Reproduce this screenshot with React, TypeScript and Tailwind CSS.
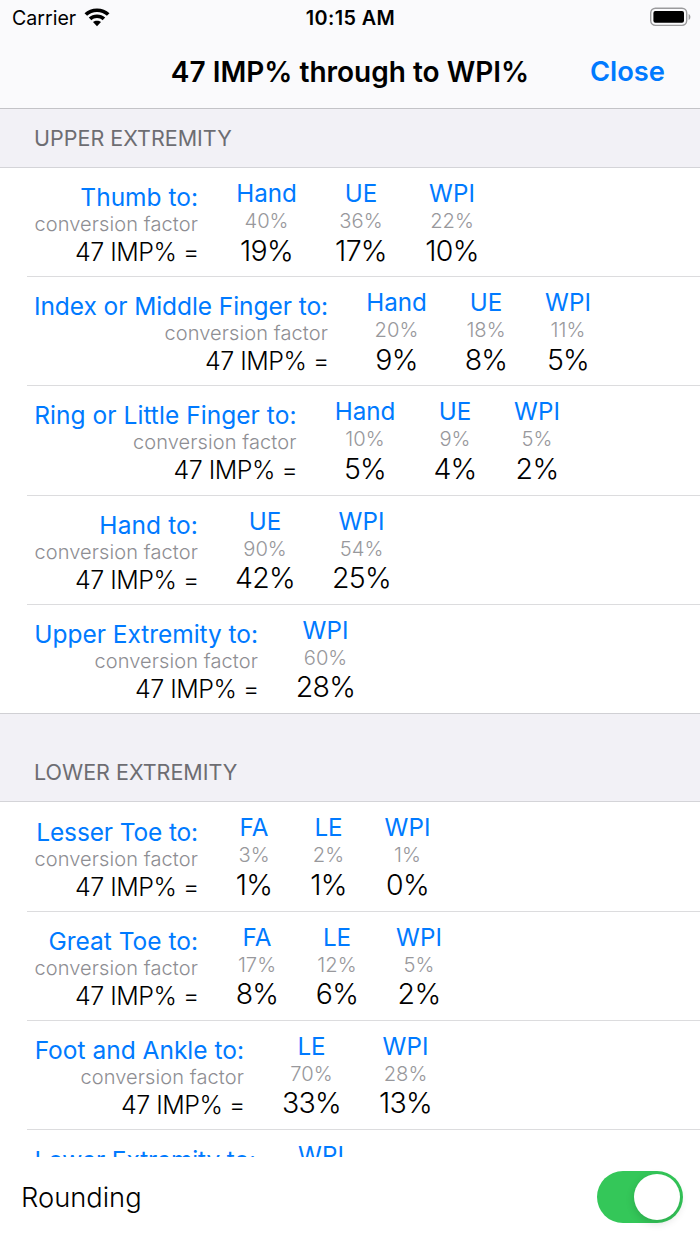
type Cell = { name: string; factor: string; value: string };
type Row = { label: string; tracking: string; cols: string; cells: Cell[] };

const upper: Row[] = [
  {
    label: "Thumb to:",
    tracking: "tracking-normal",
    cols: "grid-cols-[164px_60px_52px_53px]",
    cells: [
      { name: "Hand", factor: "40%", value: "19%" },
      { name: "UE", factor: "36%", value: "17%" },
      { name: "WPI", factor: "22%", value: "10%" },
    ],
  },
  {
    label: "Index or Middle Finger to:",
    tracking: "tracking-[-0.07px]",
    cols: "grid-cols-[294px_60px_42px_45px]",
    cells: [
      { name: "Hand", factor: "20%", value: "9%" },
      { name: "UE", factor: "18%", value: "8%" },
      { name: "WPI", factor: "11%", value: "5%" },
    ],
  },
  {
    label: "Ring or Little Finger to:",
    tracking: "tracking-[0.05px]",
    cols: "grid-cols-[262.5px_60px_43px_44px]",
    cells: [
      { name: "Hand", factor: "10%", value: "5%" },
      { name: "UE", factor: "9%", value: "4%" },
      { name: "WPI", factor: "5%", value: "2%" },
    ],
  },
  {
    label: "Hand to:",
    tracking: "tracking-[0.1px]",
    cols: "grid-cols-[164px_57px_59px]",
    cells: [
      { name: "UE", factor: "90%", value: "42%" },
      { name: "WPI", factor: "54%", value: "25%" },
    ],
  },
  {
    label: "Upper Extremity to:",
    tracking: "tracking-[-0.04px]",
    cols: "grid-cols-[224px_58px]",
    cells: [{ name: "WPI", factor: "60%", value: "28%" }],
  },
];

const lower: Row[] = [
  {
    label: "Lesser Toe to:",
    tracking: "tracking-[-0.14px]",
    cols: "grid-cols-[164px_35px_37px_44px]",
    cells: [
      { name: "FA", factor: "3%", value: "1%" },
      { name: "LE", factor: "2%", value: "1%" },
      { name: "WPI", factor: "1%", value: "0%" },
    ],
  },
  {
    label: "Great Toe to:",
    tracking: "tracking-normal",
    cols: "grid-cols-[164px_41px_42px_45px]",
    cells: [
      { name: "FA", factor: "17%", value: "8%" },
      { name: "LE", factor: "12%", value: "6%" },
      { name: "WPI", factor: "5%", value: "2%" },
    ],
  },
  {
    label: "Foot and Ankle to:",
    tracking: "tracking-normal",
    cols: "grid-cols-[210px_58px_53px]",
    cells: [
      { name: "LE", factor: "70%", value: "33%" },
      { name: "WPI", factor: "28%", value: "13%" },
    ],
  },
];

function LabelTitle({ children, tracking }: { children: string; tracking: string }) {
  return <div className={`text-[24.5px] leading-[30px] text-[#007aff] ${tracking}`}>{children}</div>;
}

function CellTitle({ children }: { children: string }) {
  return <div className="text-[24.2px] leading-[30px] text-[#007aff]">{children}</div>;
}

function ConversionRow({ row, last }: { row: Row; last: boolean }) {
  return (
    <div className={`h-[109.2px] shrink-0 ${last ? "" : "pl-[27px]"}`}>
      <div className={`h-full border-b ${last ? "border-[#d0d0d4] pl-[34px]" : "border-[#dcdcde] pl-[7px]"}`}>
        <div className={`grid gap-x-[38.5px] whitespace-nowrap ${row.cols}`}>
          <div className="flex flex-col items-end pt-[14.1px]">
            <LabelTitle tracking={row.tracking}>{row.label}</LabelTitle>
            <div className="text-[20px] leading-[24px] font-light tracking-[0.1px] text-[#8e8e93]">conversion factor</div>
            <div className="-mr-[0.8px] pt-px text-[25px] leading-[30px] font-light tracking-[-0.5px] text-black">
              47 IMP% =
            </div>
          </div>
          {row.cells.map((cell) => (
            <div key={cell.name} className="flex flex-col items-center pt-[11px]">
              <CellTitle>{cell.name}</CellTitle>
              <div className="text-[20.2px] leading-[24px] font-light text-[#98989c]">{cell.factor}</div>
              <div className="-mt-[0.5px] text-[28.5px] leading-[35px] font-light tracking-[-0.7px] text-black">{cell.value}</div>
            </div>
          ))}
        </div>
      </div>
    </div>
  );
}

function StatusBar() {
  return (
    <div className="grid h-9 grid-cols-3 items-center pr-[9px] pl-3">
      <div className="flex items-center gap-2">
        <span className="text-[19.6px] leading-6">Carrier</span>
        <svg width="26" height="19" viewBox="0 0 26 19" fill="black" className="mb-[2px]">
          <path d="M13 .4C8 .4 3.700 2.200.5 5.200l2.600 2.600C5.700 5.400 9.100 4 13 4s7.300 1.400 9.900 3.800l2.600-2.600C22.300 2.200 18 .4 13 .4z" />
          <path d="M13 6.500c-3.200 0-6 1.200-8.200 3.100l2.600 2.600c1.500-1.300 3.400-2.100 5.600-2.100s4.100.8 5.600 2.100l2.600-2.600c-2.200-1.900-5-3.100-8.200-3.100z" />
          <path d="M13 12.700c-1.500 0-2.900.5-4 1.400l4 4.200 4-4.200c-1.100-.9-2.500-1.400-4-1.400z" />
        </svg>
      </div>
      <div className="-ml-[2px] text-center text-[19.8px] leading-6 font-semibold tracking-[0.4px]">10:15 AM</div>
      <div className="flex justify-end">
        <svg width="42" height="20" viewBox="0 0 42 20" className="mb-[2px]">
          <rect x="1.7" y="1.200" width="36" height="17.200" rx="4.800" fill="none" stroke="#9b9b9d" strokeWidth="1.400" />
          <rect x="4.400" y="4" width="30.600" height="11.800" rx="2" fill="black" />
          <path d="M39.600 7v6c1.200-.5 1.800-1.700 1.800-3s-.6-2.500-1.800-3z" fill="#9b9b9d" />
        </svg>
      </div>
    </div>
  );
}

export default function App() {
  return (
    <div className="flex h-[1244px] w-[700px] flex-col overflow-hidden bg-white font-['Inter',sans-serif] text-black">
      <header className="h-[109px] shrink-0 border-b border-[#c3c3c7] bg-[#fafafc]">
        <StatusBar />
        <div className="grid h-[71px] grid-cols-[1fr_auto_1fr] items-center pr-[35px] pl-[35px]">
          <span />
          <h1 className="text-[28px] leading-8 font-semibold">47 IMP% through to WPI%</h1>
          <button className="justify-self-end pt-px text-[27.300px] leading-8 font-semibold text-[#007aff]">Close</button>
        </div>
      </header>
      <main className="flex h-[1048px] shrink-0 flex-col overflow-hidden">
        <h2 className="h-[59px] shrink-0 border-b border-[#d4d4d8] bg-[#f2f1f6] pt-[17px] pl-[34px] text-[21.5px] leading-6 text-[#6d6d72]">
          UPPER EXTREMITY
        </h2>
        {upper.map((row, i) => (
          <ConversionRow key={row.label} row={row} last={i === upper.length - 1} />
        ))}
        <h2 className="h-[88.5px] shrink-0 border-b border-[#d4d4d8] bg-[#f2f1f6] pt-[46.4px] pl-[34px] text-[21.5px] leading-6 text-[#6d6d72]">
          LOWER EXTREMITY
        </h2>
        {lower.map((row) => (
          <ConversionRow key={row.label} row={row} last={false} />
        ))}
        <div className="grid h-[27px] shrink-0 grid-cols-[222px_54px] gap-x-[38px] overflow-hidden pl-[34px] whitespace-nowrap">
          <div className="flex justify-end pt-[15px]">
            <LabelTitle tracking="tracking-[-0.12px]">Lower Extremity to:</LabelTitle>
          </div>
          <div className="flex justify-center pt-[11px]">
            <CellTitle>WPI</CellTitle>
          </div>
        </div>
      </main>
      <footer className="flex h-[87px] shrink-0 items-center justify-between pr-[17px] pb-[7px] pl-[21px]">
        <span className="pt-[2px] text-[27.3px] leading-8 font-light">Rounding</span>
        <button
          role="switch"
          aria-checked="true"
          aria-label="Rounding"
          className="flex h-[52px] w-[86px] items-center justify-end rounded-full bg-[#34c759] pr-[3px]"
        >
          <span className="size-[46px] rounded-full bg-white shadow-[0_3px_8px_rgba(0,0,0,0.15)]" />
        </button>
      </footer>
    </div>
  );
}
